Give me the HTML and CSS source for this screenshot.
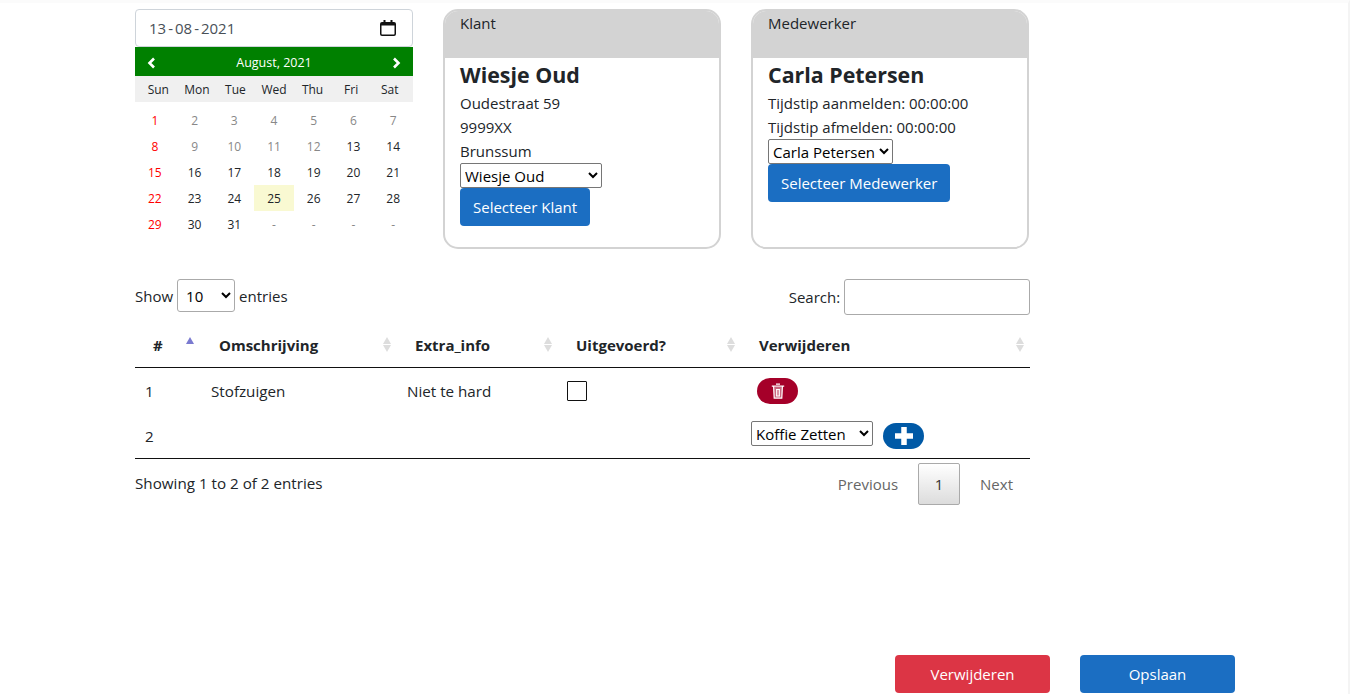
FILE: index.html
```html
<!DOCTYPE html>
<html lang="en">
<head>
  <meta charset="UTF-8" />
  <title>Werkbon</title>
  <link rel="stylesheet" href="styles.css">
</head>
<body>
  <div class="page">
    <div class="top">
      <div class="datebox">
        <div class="dateinput">
          <span>13<span class="sep">-</span>08<span class="sep">-</span>2021</span>
          <svg class="calicon" width="16" height="16" viewBox="0 0 16 16"><path d="M3.500 0h2v2h5V0h2v2H14a2 2 0 0 1 2 2v10a2 2 0 0 1-2 2H2a2 2 0 0 1-2-2V4a2 2 0 0 1 2-2h1.500zM1.500 5.500V14c0 .3.2.5.5.5h12c.3 0 .5-.2.5-.5V5.500z" fill="#111"/></svg>
        </div>
        <div class="calhead">
          <svg width="9" height="12" viewBox="0 0 9 12"><path d="M7 1.500 2.500 6 7 10.500" fill="none" stroke="#fff" stroke-width="2.600"/></svg>
          <span>August, 2021</span>
          <svg width="9" height="12" viewBox="0 0 9 12"><path d="M2 1.500 6.500 6 2 10.500" fill="none" stroke="#fff" stroke-width="2.600"/></svg>
        </div>
        <div class="calgrid weekdays">
          <span>Sun</span><span>Mon</span><span>Tue</span><span>Wed</span><span>Thu</span><span>Fri</span><span>Sat</span>
        </div>
        <div class="calgrid days">
          <span class="red">1</span><span class="old">2</span><span class="old">3</span><span class="old">4</span><span class="old">5</span><span class="old">6</span><span class="old">7</span>
          <span class="red">8</span><span class="old">9</span><span class="old">10</span><span class="old">11</span><span class="old">12</span><span>13</span><span>14</span>
          <span class="red">15</span><span>16</span><span>17</span><span>18</span><span>19</span><span>20</span><span>21</span>
          <span class="red">22</span><span>23</span><span>24</span><span class="today">25</span><span>26</span><span>27</span><span>28</span>
          <span class="red">29</span><span>30</span><span>31</span><span class="old">-</span><span class="old">-</span><span class="old">-</span><span class="old">-</span>
        </div>
      </div>

      <div class="card">
        <div class="card-head">Klant</div>
        <div class="card-body">
          <h3>Wiesje Oud</h3>
          <div class="line">Oudestraat 59</div>
          <div class="line">9999XX</div>
          <div class="line">Brunssum</div>
          <select class="pick pick-klant"><option>Wiesje Oud</option></select>
          <button class="btn blue">Selecteer Klant</button>
        </div>
      </div>

      <div class="card">
        <div class="card-head">Medewerker</div>
        <div class="card-body">
          <h3>Carla Petersen</h3>
          <div class="line">Tijdstip aanmelden: 00:00:00</div>
          <div class="line">Tijdstip afmelden: 00:00:00</div>
          <select class="pick pick-medewerker"><option>Carla Petersen</option></select>
          <button class="btn blue">Selecteer Medewerker</button>
        </div>
      </div>
    </div>

    <div class="tablewrap">
      <div class="dt-top">
        <label class="show">Show <select class="entries"><option>10</option></select> entries</label>
        <label class="search">Search: <input type="text" /></label>
      </div>
      <table>
        <thead>
          <tr>
            <th class="c1">#<i class="sort asc"></i></th>
            <th class="c2">Omschrijving<i class="sort"></i></th>
            <th class="c3">Extra_info<i class="sort"></i></th>
            <th class="c4">Uitgevoerd?<i class="sort"></i></th>
            <th class="c5">Verwijderen<i class="sort"></i></th>
          </tr>
        </thead>
        <tbody>
          <tr>
            <td>1</td>
            <td>Stofzuigen</td>
            <td>Niet te hard</td>
            <td><span class="check"></span></td>
            <td>
              <button class="pill red-pill">
                <svg width="14" height="16" viewBox="0 0 14 16"><path d="M2.500 4h9l-.6 11H3.100z" fill="#fff" fill-opacity=".4"/><path d="M5 1.100h4M.8 3.200h12.400M2.600 3.500l.6 11.700h7.600l.6-11.700M5.700 6.500v6.500M8.300 6.500v6.500M5 6.500h4M5 13h4" fill="none" stroke="#fff" stroke-width="1.200"/></svg>
              </button>
            </td>
          </tr>
          <tr class="row2">
            <td>2</td>
            <td></td>
            <td></td>
            <td></td>
            <td>
              <div class="addrow">
                <select class="pick pick-taak"><option>Koffie Zetten</option></select>
                <button class="pill blue-pill">
                  <svg width="18" height="18" viewBox="0 0 18 18"><path d="M9 0v18M0 9h18" fill="none" stroke="#fff" stroke-width="5.500"/></svg>
                </button>
              </div>
            </td>
          </tr>
        </tbody>
      </table>
      <div class="dt-bottom">
        <div class="info">Showing 1 to 2 of 2 entries</div>
        <div class="paging">
          <a>Previous</a>
          <a class="current">1</a>
          <a>Next</a>
        </div>
      </div>
    </div>

    <div class="actions">
      <button class="btn wide danger">Verwijderen</button>
      <button class="btn wide blue">Opslaan</button>
    </div>
  </div>
</body>
</html>
```

FILE: styles.css
```css
* {
  box-sizing: border-box;
}
html, body {
  height: 100%;
}
body {
  margin: 0;
  font-family: "Open Sans", "Noto Sans", sans-serif;
  font-size: 15px;
  line-height: 24px;
  color: #212529;
  background: white;
  overflow: hidden;
}
.page {
  height: 694px;
  padding: 6px 0 0 135px;
  border-top: 3px solid #fbfbfb;
  border-right: 2px solid #f4f4f4;
  display: flex;
  flex-direction: column;
}
.top {
  display: flex;
  gap: 30px;
}
.datebox {
  width: 278px;
}
.dateinput {
  height: 38px;
  border: 1px solid #ced4da;
  border-radius: 4px;
  padding: 0 16px 0 13px;
  display: flex;
  align-items: center;
  justify-content: space-between;
  color: #495057;
}
.sep {
  margin: 0 2px;
}
.calicon {
  display: block;
  margin-top: -1px;
}
.calhead {
  height: 29px;
  background: green;
  color: white;
  font-size: 12.500px;
  display: flex;
  align-items: center;
  justify-content: space-between;
  padding: 2px 12px 0;
}
.calgrid {
  display: grid;
  grid-template-columns: repeat(7, 1fr);
  text-align: center;
  font-size: 12px;
}
.weekdays {
  background: #f0f0f0;
  height: 26px;
  line-height: 28px;
  padding: 0 4px;
  margin-bottom: 5px;
}
.days span {
  height: 26px;
  line-height: 28px;
}
.days .old {
  color: #888;
}
.days .red {
  color: red;
}
.days .today {
  background: #f9f9d2;
}
.card {
  width: 278px;
  height: 240px;
  border: 2px solid #d3d3d3;
  border-radius: 15px;
  overflow: hidden;
}
.card-head {
  height: 47px;
  background: lightgray;
  padding: 0 15px;
  line-height: 24px;
}
.card-body {
  padding: 3px 15px 0;
}
.card-body h3 {
  margin: 0 0 2px;
  font-size: 21.400px;
  line-height: 28px;
  font-weight: 700;
}
.line {
  height: 24px;
}
.pick {
  display: block;
  height: 25px;
  font: inherit;
  color: black;
  background: white;
  border: 1px solid #767676;
  border-radius: 2px;
}
.pick-klant {
  width: 142px;
}
.pick-medewerker {
  width: 125px;
}
.btn {
  display: block;
  height: 38px;
  padding: 0 13px;
  border: none;
  border-radius: 4px;
  color: white;
  font: inherit;
}
.blue {
  background: #1b6ec2;
}
.danger {
  background: #dc3545;
}
.wide {
  width: 155px;
}
.tablewrap {
  width: 895px;
  margin-top: 30px;
}
.dt-top {
  display: flex;
  justify-content: space-between;
  height: 36px;
}
.show {
  display: flex;
  align-items: center;
  height: 33px;
  gap: 4px;
}
.search {
  padding-top: 6px;
}
.entries {
  width: 58px;
  height: 33px;
  font: inherit;
  background: white;
  border: 1px solid #aaa;
  border-radius: 3px;
  padding: 4px;
}
.search input {
  width: 186px;
  height: 36px;
  border: 1px solid #aaa;
  border-radius: 3px;
  vertical-align: top;
  margin-top: -6px;
}
table {
  width: 100%;
  border-collapse: collapse;
  table-layout: fixed;
  margin-top: 9px;
}
th {
  position: relative;
  height: 43px;
  text-align: left;
  padding: 0 10px 0 18px;
  border-bottom: 1px solid #111;
}
th.c1 { width: 66px; }
th.c2 { width: 196px; }
th.c3 { width: 161px; }
th.c4 { width: 183px; }
td {
  vertical-align: top;
  height: 46px;
  padding: 11px 10px 0;
  font-size: 15.200px;
}
.row2 td {
  height: 45px;
  padding-top: 11px;
  border-bottom: 1px solid #111;
}
.sort {
  position: absolute;
  right: 6px;
  top: 13px;
  width: 8px;
  height: 15px;
}
.sort::before, .sort::after {
  content: "";
  position: absolute;
  left: 0;
  border-left: 4px solid transparent;
  border-right: 4px solid transparent;
}
.sort::before {
  top: 0;
  border-bottom: 7px solid #ddd;
}
.sort::after {
  bottom: 0;
  border-top: 7px solid #ddd;
}
.sort.asc::before {
  border-bottom-color: #7a7ad0;
}
.sort.asc::after {
  display: none;
}
.c1 .sort {
  right: 7px;
}
.check {
  display: block;
  width: 20px;
  height: 20px;
  margin: 2px 0 0 -1px;
  border: 1px solid #111;
  border-radius: 1px;
}
.pill {
  display: flex;
  align-items: center;
  justify-content: center;
  width: 41px;
  height: 26px;
  border: none;
  border-radius: 13px;
  padding: 0;
}
.red-pill {
  background: #a50029;
  margin: -1px 0 0 6px;
}
.blue-pill {
  background: #0059a6;
  margin-top: 2px;
}
.addrow {
  display: flex;
  align-items: flex-start;
  gap: 10px;
  margin-top: -3px;
}
.pick-taak {
  width: 122px;
  font-size: 15px;
}
.dt-bottom {
  display: flex;
  justify-content: space-between;
  padding-top: 4px;
}
.info {
  padding-top: 8px;
  font-size: 15.200px;
}
.paging {
  display: flex;
  align-items: center;
  color: #666;
  padding-right: 7px;
}
.paging a {
  padding: 0 10px;
}
.paging .current {
  width: 42px;
  height: 42px;
  line-height: 40px;
  margin: 0 10px;
  padding: 0;
  text-align: center;
  color: #333;
  border: 1px solid #aaa;
  border-radius: 2px;
  background: linear-gradient(#fff, #dcdcdc);
}
.actions {
  margin-top: auto;
  display: flex;
  gap: 30px;
  padding: 0 113px 1px 0;
  justify-content: flex-end;
}
```
